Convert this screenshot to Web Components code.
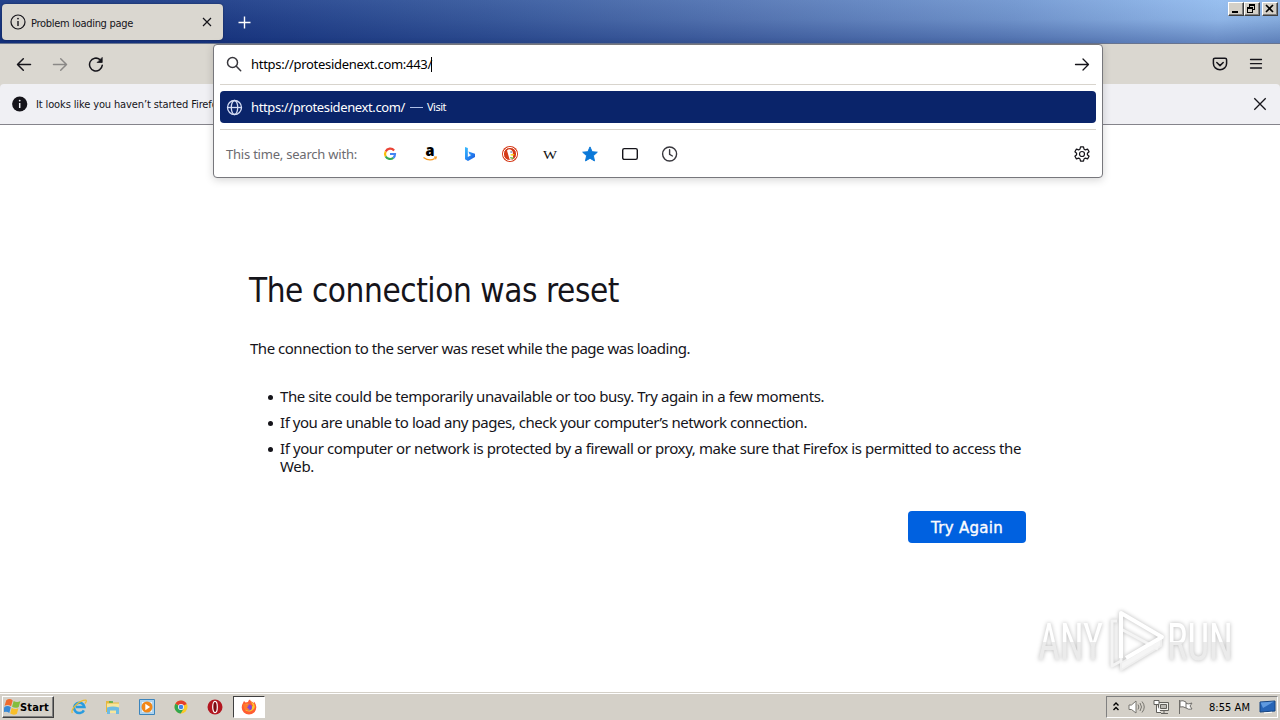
<!DOCTYPE html>
<html lang="en">
<head>
<meta charset="utf-8">
<title>Problem loading page</title>
<style>
  html, body {
    margin: 0;
    height: 100%;
    overflow: hidden;
    background: #fff;
    font-family: "DejaVu Sans Condensed", "DejaVu Sans", sans-serif;
    font-stretch: condensed;
    color: #15141a;
  }
</style>
</head>
<body>
<browser-window>
  <title-bar slot="title">
    <browser-tab><ui-text width="102">Problem loading page</ui-text></browser-tab>
  </title-bar>
  <nav-bar slot="nav"></nav-bar>
  <notice-bar slot="notice"><ui-text width="187">It looks like you haven’t started Firefox</ui-text></notice-bar>
  <url-popup slot="popup"></url-popup>
  <error-page slot="page">
    <ui-text slot="title" width="370">The connection was reset</ui-text>
    <ui-text slot="lead" width="440">The connection to the server was reset while the page was loading.</ui-text>
    <li><ui-text width="544">The site could be temporarily unavailable or too busy. Try again in a few moments.</ui-text></li>
    <li><ui-text width="527">If you are unable to load any pages, check your computer’s network connection.</ui-text></li>
    <li><ui-text width="741">If your computer or network is protected by a firewall or proxy, make sure that Firefox is permitted to access the</ui-text><br><ui-text width="34">Web.</ui-text></li>
    <ui-text slot="action" width="72">Try Again</ui-text>
  </error-page>
  <any-run slot="mark"></any-run>
  <task-bar slot="tasks"></task-bar>
</browser-window>

<script>
const make = (name, html, setup) => {
  customElements.define(name, class extends HTMLElement {
    constructor() {
      super();
      this.attachShadow({ mode: "open" });
      this.shadowRoot.innerHTML = html;
    }

    connectedCallback() {
      if (setup) setup(this);
    }
  });
};

make("browser-window", `
  <style>
    :host {
      display: flex;
      flex-direction: column;
      position: relative;
      width: 1280px;
      height: 720px;
      overflow: hidden;
      background: #fff;
    }
    main { flex: 1; min-height: 0; }
    .popup { position: absolute; left: 213px; top: 44px; }
    .mark { position: absolute; left: 1030px; top: 604px; }
  </style>
  <slot name="title"></slot>
  <slot name="nav"></slot>
  <slot name="notice"></slot>
  <main><slot name="page"></slot></main>
  <slot name="tasks"></slot>
  <div class="popup"><slot name="popup"></slot></div>
  <div class="mark"><slot name="mark"></slot></div>
`);

make("title-bar", `
  <style>
    :host {
      display: flex;
      justify-content: space-between;
      box-sizing: border-box;
      height: 44px;
      padding: 4px 2px 0;
      border-bottom: 1px solid #68748f;
      background:
        linear-gradient(180deg, rgba(170, 205, 255, .06), rgba(0, 20, 90, .06) 45%, rgba(0, 25, 100, .34)),
        linear-gradient(97deg, #1c3a84 0%, #213f88 17%, #3a5b9d 38%, #5878b4 58%, #7599d0 79%, #98bfef 95%, #8db4e4 100%);
    }
    .left { display: flex; align-items: center; height: 36px; }
    .plus { margin-left: 14px; }
    .win { display: flex; margin-top: -2px; height: 14px; }
    .win svg {
      box-sizing: border-box;
      width: 16px;
      height: 14px;
      background: #d4d0c8;
      border: 1px solid;
      border-color: #fff #404040 #404040 #fff;
      box-shadow: inset -1px -1px #808080;
    }
    .win svg:last-child { margin-left: 2px; }
  </style>
  <div class="left">
    <slot></slot>
    <svg class="plus" width="16" height="16" fill="none" stroke="#fff" stroke-width="1.4"><path d="M7.5 2.5v12M1.5 8.5h12"/></svg>
  </div>
  <div class="win">
    <svg viewBox="0 0 14 12" shape-rendering="crispEdges"><path d="M3 8h6v2H3z"/></svg>
    <svg viewBox="0 0 14 12" shape-rendering="crispEdges"><path fill-rule="evenodd" d="M4 1h6v6H8v3H2V4h2zM5 3v1h3v2h1V3zM3 6v3h4V6z"/></svg>
    <svg viewBox="0 0 14 12"><path d="M3 2l7 7M10 2L3 9" stroke="#000" stroke-width="1.6"/></svg>
  </div>
`);

make("browser-tab", `
  <style>
    :host {
      display: flex;
      align-items: center;
      box-sizing: border-box;
      width: 221px;
      height: 36px;
      padding: 0 10px 0 8px;
      border-radius: 4px;
      background: #dad7d0;
      box-shadow: 0 0 2px rgba(0, 0, 0, .45);
      font-size: 11px;
      color: #15141a;
    }
    ::slotted(*) { margin: 2px 0 0 5px; }
    .close { margin-left: auto; }
  </style>
  <svg width="16" height="16" fill="none" stroke="#15141a" stroke-width="1.2"><circle cx="8" cy="8" r="7"/><path d="M8 7v5" stroke-width="1.4"/><circle cx="8" cy="4.6" r=".9" fill="#15141a" stroke="none"/></svg>
  <slot></slot>
  <svg class="close" width="12" height="12" fill="none" stroke="#15141a" stroke-width="1.2"><path d="M2 2l8 8M10 2l-8 8"/></svg>
`);

make("nav-bar", `
  <style>
    :host {
      display: flex;
      align-items: center;
      box-sizing: border-box;
      height: 40px;
      padding: 0 16px;
      gap: 20px;
      background: #dad7d0;
    }
    svg { fill: none; stroke: #15141a; stroke-width: 1.5; stroke-linecap: round; stroke-linejoin: round; }
    .off { opacity: .4; }
    .pocket { margin-left: auto; }
  </style>
  <svg width="16" height="16"><path d="M14.5 8.5H1.7M7.3 2.7L1.5 8.5l5.8 5.8"/></svg>
  <svg class="off" width="16" height="16"><path d="M1.5 8.5h12.8M8.7 2.7l5.8 5.8-5.8 5.8"/></svg>
  <svg width="16" height="16"><path d="M14.3 9.2A6.4 6.4 0 1 1 12 3.6"/><path d="M14.2 1.8v4.7H9.5z" fill="#15141a" stroke-width=".8"/></svg>
  <svg class="pocket" width="16" height="16"><path d="M3 2.2h10q1.6 0 1.6 1.6v3.6a6.6 6.3 0 0 1-13.2 0V3.8Q1.4 2.2 3 2.2z"/><path d="M4.8 6.5L8 9.6l3.2-3.1"/></svg>
  <svg width="16" height="16" stroke-linecap="butt"><path d="M2.5 3.5h11M2.5 7.7h11M2.5 12h11" stroke-width="1.3"/></svg>
`);

make("notice-bar", `
  <style>
    :host {
      display: flex;
      align-items: center;
      box-sizing: border-box;
      height: 41px;
      padding: 0 12px;
      border-bottom: 1px solid #85848b;
      border-radius: 4px 4px 0 0;
      background: #f0f0f4;
      font-size: 11px;
      box-shadow: 0 -4px #dad7d0;
    }
    ::slotted(*) { margin-left: 8px; }
    .close { margin-left: auto; }
  </style>
  <svg width="16" height="16"><circle cx="7.7" cy="8" r="7.6" fill="#15141a"/><path d="M7.7 7v5" stroke="#f0f0f4" stroke-width="1.5"/><circle cx="7.7" cy="4.6" r=".9" fill="#f0f0f4"/></svg>
  <slot></slot>
  <svg class="close" width="16" height="16" fill="none" stroke="#15141a" stroke-width="1.3"><path d="M2.3 2.3l11.4 11.4M13.7 2.3L2.3 13.7"/></svg>
`);

make("url-popup", `
  <style>
    :host {
      display: block;
      box-sizing: border-box;
      width: 890px;
      height: 134px;
      padding: 0 6px;
      border: 1px solid #77777c;
      border-radius: 4px;
      background: #fff;
      box-shadow: 0 2px 9px rgba(0, 0, 0, .17);
      font-family: "Noto Sans", sans-serif;
      font-size: 13px;
      line-height: 16px;
    }
    svg { flex: none; overflow: visible; }
    .input, .row, .engines { display: flex; align-items: center; }
    .input { height: 38px; padding: 0 6px 1px; border-bottom: 1px solid #d8d4cd; color: #000; }
    .input ui-text { margin-left: 9px; }
    .caret { width: 1px; height: 15px; margin-left: -1px; background: #000; }
    .go { margin-left: auto; }
    .row { height: 32px; margin: 6px 0; padding: 0 6px; border-radius: 4px; background: #0a246a; color: #fff; }
    .row ui-text { margin-left: 9px; }
    .row .dash { width: 13px; height: 1px; margin: 1px 0 0 5px; background: #aebfe8; }
    .row .visit { margin-left: 4px; font-size: 11px; }
    .engines { height: 47px; padding: 0 6px; border-top: 1px solid #d8d4cd; color: #6c6b70; }
    .icons { display: flex; gap: 24px; margin-left: 25px; }
    .gear { margin-left: auto; }
  </style>
  <div class="input">
    <svg width="16" height="16" fill="none" stroke="#38373d" stroke-width="1.5" stroke-linecap="round"><circle cx="6.5" cy="6.5" r="5"/><path d="M10.3 10.3l4.4 4.4"/></svg>
    <ui-text width="181">https://protesidenext.com:443/</ui-text><i class="caret"></i>
    <svg class="go" width="16" height="16" fill="none" stroke="#15141a" stroke-width="1.3" stroke-linecap="round" stroke-linejoin="round"><path d="M1.5 8.5h13M9 3l5.5 5.5L9 14"/></svg>
  </div>
  <div class="row">
    <svg width="16" height="16" fill="none" stroke="#d5ddf5" stroke-width="1.3"><circle cx="8.5" cy="8.5" r="7"/><ellipse cx="8.5" cy="8.5" rx="3.2" ry="7"/><path d="M1.5 8.5h14"/></svg>
    <ui-text width="154">https://protesidenext.com/</ui-text>
    <i class="dash"></i>
    <ui-text class="visit" width="19">Visit</ui-text>
  </div>
  <div class="engines">
    <ui-text width="131">This time, search with:</ui-text>
    <div class="icons">
      <svg width="16" height="16" fill="none" stroke-width="2.2"><path d="M12.1 4.5A5 5 0 0 0 3.7 5.5" stroke="#ea4335"/><path d="M3.7 5.5a5 5 0 0 0 0 5" stroke="#fbbc05"/><path d="M3.7 10.5a5 5 0 0 0 7.6 1.3" stroke="#34a853"/><path d="M8 8h5a5 5 0 0 1-1.7 3.8" stroke="#4285f4"/></svg>
      <svg width="16" height="16"><text x="3.4" y="10.3" font-family="Open Sans" font-weight="800" font-size="15" textLength="9" lengthAdjust="spacingAndGlyphs" fill="#000">a</text><path d="M1.5 11.5q6 4.4 11.2 1M12 11.2l2.3-.1-.8 2.2" fill="none" stroke="#f7981d" stroke-width="1.2"/></svg>
      <svg width="16" height="16"><defs><linearGradient id="b" x2="1" y2="1"><stop stop-color="#37bdff"/><stop offset=".6" stop-color="#237ff0"/><stop offset="1" stop-color="#1b54d8"/></linearGradient></defs><path fill="url(#b)" d="M3 1l2.8 1v9l3.4-2-1.7-.8-1.1-2.7L13 7.8v3.2L6 15l-3-1.7z"/></svg>
      <svg width="16" height="16"><circle cx="8" cy="8" r="8" fill="#d53a18"/><circle cx="8" cy="8" r="6.6" fill="none" stroke="#fff" stroke-width="1"/><path d="M5 4.500q2.200-2.100 4.700-.3 1.500 1.200 1.100 4l.4 4.800q-1.700 1-3.500.8z" fill="#fff"/><circle cx="9.1" cy="6" r=".7" fill="#2d4f8e"/><path d="M8.5 8.3l4-.4-.8 1.5-3 .2z" fill="#fdd209"/><path d="M8.2 11l3.3.4-.5 1.8-2.8-1z" fill="#66bd47"/></svg>
      <svg width="16" height="16"><text x="1" y="12.6" font-family="Liberation Serif" font-size="13.5" textLength="14" lengthAdjust="spacingAndGlyphs" fill="#111">W</text></svg>
      <svg width="16" height="16"><path fill="#0a78d8" stroke="#0a78d8" stroke-linejoin="round" d="M8 .9l2.1 4.8 5.2.5-3.9 3.5 1.1 5.2L8 12.3l-4.500 2.600 1.100-5.200L.7 6.200l5.200-.5z"/></svg>
      <svg width="16" height="16" fill="none" stroke="#15141a" stroke-width="1.4"><rect x=".7" y="2.6" width="14.6" height="10.8" rx="1.6"/></svg>
      <svg width="16" height="16" fill="none" stroke="#38373d" stroke-width="1.4" stroke-linecap="round"><circle cx="7.6" cy="8" r="7"/><path d="M7.6 3.8v4.6l2.8 1.6"/></svg>
    </div>
    <svg class="gear" width="16" height="16" fill="none" stroke="#15141a" stroke-width="1.2" stroke-linejoin="round"><circle cx="8" cy="8" r="2.5"/><path d="M6.5.8h3l.5 2.3 1.3.8 2.3-.8 1.500 2.600L13.400 7.300v1.400l1.700 1.600-1.500 2.600-2.300-.8-1.300.8-.5 2.300h-3L6 12.900l-1.300-.8-2.300.8L.9 10.300l1.700-1.600V7.300L.9 5.700l1.500-2.600 2.300.8L6 3.100z"/></svg>
  </div>
`);

make("error-page", `
  <style>
    :host {
      display: block;
      width: 776px;
      margin: 0 auto 0 250px;
      padding-top: 144px;
      font-family: "Noto Sans", sans-serif;
      font-size: 15px;
      line-height: 18px;
    }
    h1 { margin: 0 0 0 -1px; font-family: "DejaVu Sans Condensed", sans-serif; font-size: 33px; font-weight: 400; line-height: 44px; }
    p { margin: 26px 0 30px; }
    ul { margin: 0; padding: 0 0 0 30px; }
    ::slotted(li) { margin-bottom: 8px; list-style: none; }
    ::slotted(li)::before {
      content: "";
      display: inline-block;
      width: 5px;
      height: 5px;
      margin: 0 7px 0 -12px;
      border-radius: 50%;
      background: #15141a;
      vertical-align: 2px;
    }
    button {
      display: block;
      width: 118px;
      height: 32px;
      margin: 36px 0 0 auto;
      padding: 1px 0 0;
      border: 0;
      border-radius: 4px;
      background: #0061e0;
      color: #fbfbfe;
      font: 500 15px/18px "DejaVu Sans", sans-serif;
      font-stretch: normal;
      -webkit-text-stroke: .4px #fbfbfe;
    }
  </style>
  <h1><slot name="title"></slot></h1>
  <p><slot name="lead"></slot></p>
  <ul><slot></slot></ul>
  <button><slot name="action"></slot></button>
`);

make("any-run", `
  <style>
    :host { display: block; }
    svg { display: block; overflow: visible; filter: drop-shadow(0 0 2px rgba(0, 0, 0, .28)); }
    text { font-family: Roboto, "Liberation Sans", sans-serif; font-size: 52px; font-weight: 400; }
  </style>
  <svg width="240" height="80" viewBox="0 0 240 80">
    <defs><linearGradient id="g" gradientUnits="userSpaceOnUse" x1="0" y1="18" x2="0" y2="56"><stop offset=".52" stop-color="#fff"/><stop offset=".53" stop-color="#ebebeb"/></linearGradient></defs>
    <text x="8" y="56" textLength="65" lengthAdjust="spacingAndGlyphs" fill="url(#g)">ANY</text>
    <text x="137" y="56" textLength="66" lengthAdjust="spacingAndGlyphs" fill="url(#g)">RUN</text>
    <g fill="none" stroke-linejoin="round" stroke="#fff" stroke-width="4">
      <path d="M91 66l40-24v-7L91 59z" stroke="#efefef" fill="#f5f5f5" stroke-width="2"/>
      <path d="M87 17h-5v45l9-5V25l37 20" stroke="#f4f4f4" stroke-width="3"/>
      <path d="M91 54V9l41 24-36 21"/>
    </g>
  </svg>
`);

make("task-bar", `
  <style>
    :host {
      display: flex;
      align-items: center;
      justify-content: space-between;
      box-sizing: border-box;
      height: 28px;
      padding: 2px 2px 1px;
      border-top: 1px solid #d4d0c8;
      box-shadow: inset 0 1px #fff;
      background: #d4d0c8;
      font-size: 11px;
      color: #000;
    }
    div { display: flex; align-items: center; }
    .start {
      box-sizing: border-box;
      width: 52px;
      height: 22px;
      padding-left: 1px;
      border: 1px solid;
      border-color: #fff #404040 #404040 #fff;
      box-shadow: inset -1px -1px #808080;
      font-weight: 700;
    }
    .start ui-text { margin-left: -1px; }
    .start svg { flex: none; }
    .apps { gap: 18px; margin-left: 17px; }
    .active {
      justify-content: center;
      box-sizing: border-box;
      width: 32px;
      height: 22px;
      margin-left: 10px;
      border: 1px solid;
      border-color: #404040 #fff #fff #404040;
      background: #fff;
    }
    .tray {
      box-sizing: border-box;
      width: 172px;
      height: 22px;
      padding-left: 5px;
      border: 1px solid;
      border-color: #808080 #fff #fff #808080;
    }
  </style>
  <div>
    <div class="start">
      <svg width="17" height="18" viewBox="1 1.5 15 15"><path d="M3 3q3-2 5.7.2L7.2 8.3Q4.5 6.4 1.5 8z" fill="#ef6b2e"/><path d="M9.5 3.7q3 1.8 6 .1L14 8.9q-2.900 1.600-5.900-.2z" fill="#83bd3d"/><path d="M1.300 9q3-1.700 5.700.2l-1.300 5q-2.700-2-5.400-.4z" fill="#3889d6"/><path d="M7.800 9.700q3 1.900 5.900.3l-1.300 5q-2.900 1.700-5.900-.2z" fill="#f9bf29"/></svg>
      <ui-text width="29">Start</ui-text>
    </div>
    <div class="apps">
      <svg width="16" height="16" fill="none"><path d="M12.9 11.3A5.2 5.2 0 1 1 13.4 7.9H5" stroke="#299cdf" stroke-width="2.5"/><path d="M1.3 14Q-.2 11 5 6t10-4.8q1 1-1 3.3" stroke="#ecbb31" stroke-width="1.2"/></svg>
      <svg width="16" height="16"><path d="M1 2h5l1 1.500h7V13H1z" fill="#e6b83f"/><path d="M2 4.500h12V14H2z" fill="#f7e59b"/><path d="M2 8.500q6-2 12 0V15h-3v-3.500H5V15H2z" fill="#6dbbe3"/><path d="M4 3h4" stroke="#4cae48" stroke-width="1.5"/></svg>
      <svg width="16" height="16"><path d="M.5.5h15v15H.5z" fill="#aed3ee" stroke="#3b84bc"/><path d="M3 3h10v10H3z" fill="#e9f3fb"/><circle cx="8" cy="8" r="5.5" fill="#f18718"/><path d="M6.3 4.8l4.8 3.2-4.8 3.2z" fill="#fff"/></svg>
      <svg width="16" height="16"><circle cx="8" cy="8" r="6.5" fill="#fbc928"/><path d="M8 8L2.4 4.7A6.5 6.5 0 0 1 13.7 5z" fill="#e33e2d"/><path d="M8 8L2.4 4.7A6.5 6.5 0 0 0 7.7 14.5L10.8 9.500z" fill="#31a650"/><circle cx="8" cy="8" r="3" fill="#fff"/><circle cx="8" cy="8" r="2.3" fill="#4284e8"/></svg>
      <svg width="16" height="16"><circle cx="8" cy="8" r="7.5" fill="#b31620"/><ellipse cx="8" cy="8" rx="2.3" ry="5.6" fill="#7d0a12" stroke="#fff" stroke-width="1.2"/></svg>
    </div>
    <div class="active">
      <svg width="16" height="16"><path d="M2 4l1-2 1.500 1.500L7 3q.2-2 2-2.500Q9 2 11.500 3l1.300 1.500V2.600q2.700 2.500 2.500 6a7.300 7 0 0 1-14.600 0Q.7 5.800 2 4z" fill="#ff5d32"/><path d="M9 .5q0 2 2.500 3.200t2.300 4.200A6 6 0 0 1 4 11l8-4z" fill="#ffc72c"/><path d="M3 5l4-.5 3 2.500q1 3-2 4T3.500 9z" fill="#ff9828"/><circle cx="8" cy="8.4" r="3" fill="#8645cf"/><path d="M2 5.500q2-1.300 4 .5L8 6.500 6 8.300q1 2 3.300 1.500-2.800 2.500-5.800.3z" fill="#ff792b"/></svg>
    </div>
  </div>
  <div class="tray">
    <svg width="8" height="12" fill="none" stroke="#000" stroke-width="1.4"><path d="M1.500 4.500L4 2l2.500 2.500M1.500 9L4 6.500 6.500 9"/></svg>
    <svg width="18" height="16" style="margin-left:8px" fill="none" stroke="#77756f"><path d="M1 6h2.500L8 2v12L3.500 10.500H1z" fill="#fff"/><path d="M10 5.500q1.700 2.500 0 5M12 4q3 4 0 8M14 2.500q4.500 5.500 0 11"/></svg>
    <svg width="18" height="16" style="margin-left:7px" fill="none" stroke="#62605c"><path d="M5.500 3.500h10v8h-10z" fill="#efeeea"/><path d="M7.500 5.500h6v4h-6z" fill="#bbb9b4"/><path d="M8 14.500h7M11 12v2M1 1.500h5v4H1zM3.500 5.500v8H8" fill="#fff"/></svg>
    <svg width="18" height="16" style="margin-left:6px" fill="#fff" stroke="#706e6a"><path d="M2.500 1v14M3 2q3-1 6 1v6q-3-2-6-1zM9 4.500q2.500 1 6-.5l-2 3 2 3q-3.500 1-6-1"/></svg>
    <ui-text width="41" style="margin-left:14px">8:55 AM</ui-text>
    <svg width="18" height="16" style="margin-left:9px"><path d="M1 3l15-1v10L1 13z" fill="#2765b7" stroke="#174580"/><path d="M1.500 3.500L15 2.500 4 9z" fill="#5f9ae0"/><path d="M5 14l8-.8" stroke="#fff"/></svg>
  </div>
`);

// Spreads the letters of one line over a set width in pixels.
make("ui-text", `
  <style>
    :host { display: inline-block; white-space: nowrap; }
    span { display: inline-block; white-space: nowrap; }
  </style>
  <span><slot></slot></span>
`, (el) => {
  const target = parseFloat(el.getAttribute("width"));
  const span = el.shadowRoot.querySelector("span");
  const spacing = (target - span.getBoundingClientRect().width) / el.textContent.length;
  span.style.letterSpacing = spacing + "px";
  el.style.width = target + "px";
});
</script>
</body>
</html>
